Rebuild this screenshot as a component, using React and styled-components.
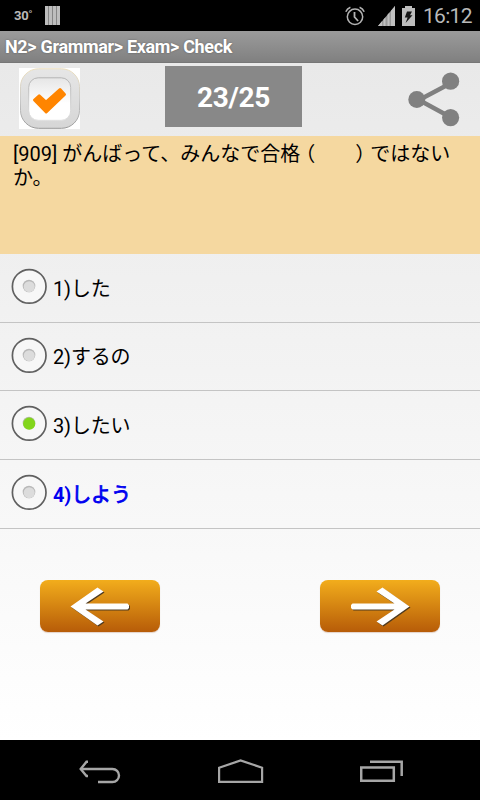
import React, { useState } from 'react';
import styled, { createGlobalStyle } from 'styled-components';

const GlobalStyle = createGlobalStyle`
  body {
    margin: 0;
    background: #000;
    font-family: Roboto, "Noto Sans CJK JP", sans-serif;
  }
`;

const Screen = styled.div`
  display: flex;
  flex-direction: column;
  width: 480px;
  height: 800px;
  overflow: hidden;
`;

const StatusBar = styled.header`
  box-sizing: border-box;
  display: flex;
  align-items: center;
  justify-content: space-between;
  height: 31px;
  padding: 0 8px 0 14px;
  background: #000;
  color: #b9b9b9;
`;

const StatusGroup = styled.div`
  display: flex;
  align-items: center;
  gap: ${(props) => props.$gap}px;
`;

const Temperature = styled.span`
  width: 18px;
  font-size: 13px;
  font-weight: 700;
  line-height: 30px;
  letter-spacing: -0.3px;
  padding-top: 1px;
`;

const Clock = styled.span`
  width: 49px;
  padding-top: 2px;
  font-size: 21px;
  line-height: 29px;
  letter-spacing: -0.7px;
  white-space: nowrap;
`;

const TitleBar = styled.div`
  box-sizing: border-box;
  height: 32px;
  padding-left: 5px;
  border-bottom: 1px solid #777;
  background: linear-gradient(#9b9b9b, #808080);
  color: #fff;
  font-size: 18px;
  font-weight: 700;
  line-height: 32px;
  letter-spacing: -0.33px;
  text-shadow: 0 0 2px rgba(0, 0, 0, 0.35);
  white-space: nowrap;
`;

const Content = styled.main`
  display: flex;
  flex-direction: column;
  height: 677px;
  background: linear-gradient(#e9e9e9, #fff);
`;

const Toolbar = styled.div`
  box-sizing: border-box;
  display: flex;
  align-items: flex-start;
  height: 73px;
  padding: 3px 18px 0 19px;
`;

const IconButton = styled.button`
  display: block;
  padding: 0;
  border: 0;
  margin-top: ${(props) => props.$top}px;
  background: none;
  line-height: 0;
`;

const Counter = styled.div`
  width: 137px;
  height: 61px;
  margin: 0 auto 0 85px;
  background: #888;
  color: #fff;
  font-size: 28px;
  font-weight: 700;
  line-height: 63px;
  letter-spacing: -0.3px;
  text-align: center;
`;

const Question = styled.p`
  box-sizing: border-box;
  height: 118px;
  margin: 0;
  padding: 5px 12px 0 13px;
  background: #f5d8a0;
  color: #000;
  font-size: 20px;
  line-height: 24px;
`;

// half-width form of the full-width brackets
const Blank = styled.span`
  margin: 0 5px;
  font-family: "Noto Sans CJK JP", sans-serif;
  font-feature-settings: "halt";
`;

const Option = styled.label`
  box-sizing: border-box;
  display: flex;
  align-items: center;
  gap: 5px;
  height: ${(props) => props.$height}px;
  padding: 0 0 3px 11px;
  border-bottom: 1px solid #c4c4c4;
  color: ${(props) => (props.$correct ? '#0000f0' : '#000')};
  font-size: 20px;
`;

const OptionText = styled.span`
  padding-top: 4px;
  line-height: 24px;
  letter-spacing: -0.15px;
`;

const OptionNumber = styled.span`
  font-weight: ${(props) => (props.$correct ? 700 : 400)};
`;

const OptionLabel = styled.span`
  -webkit-text-stroke: ${(props) => (props.$correct ? '0.8px' : '0')};
`;

const Pager = styled.div`
  display: flex;
  justify-content: space-between;
  padding: 51px 40px 0;
`;

const PagerButton = styled.button`
  display: flex;
  align-items: center;
  justify-content: center;
  width: 120px;
  height: 52px;
  padding: 1px 0 0 1px;
  border: 0;
  border-radius: 8px;
  background: linear-gradient(#f2ad1c, #b75c08);
  box-shadow: 0 1px 1px rgba(150, 80, 40, 0.25);
`;

const NavBar = styled.nav`
  box-sizing: border-box;
  display: flex;
  align-items: center;
  justify-content: space-between;
  height: 60px;
  padding: 3px 77px 0 79px;
  background: #000;
`;

const AlarmIcon = () => (
  <svg width="20" height="20" viewBox="0 0 20 20" fill="none" stroke="#b3b3b3" strokeWidth="1.5">
    <circle cx="10" cy="10.8" r="7.7" />
    <path d="M9.5 6v5l3.6 4" strokeWidth="1.8" />
    <path d="M.8 5.8Q2 2.5 5.4 1.2M19.2 5.8Q18 2.5 14.6 1.2" />
  </svg>
);

const SignalIcon = () => (
  <svg width="18" height="20" viewBox="0 0 18 20">
    <path d="M0 20 17 0v20z" fill="#999" />
    <path d="M0 20 4 15.3V20zM5.5 20v-6.5l2-2.3V20zM9.5 20V8.8l2-2.3V20zM13 20V4.7L17 0v20z" fill="#c0c0c0" />
  </svg>
);

const BatteryIcon = () => (
  <svg width="13" height="20" viewBox="0 0 13 20">
    <path d="M3 0h7v2h3v18H0V2h3z" fill="#bdbdbd" />
    <path d="M5 5.5h5L8 9.3h2.5L3.6 17l2-5.5H2.8z" fill="#151515" />
  </svg>
);

const BarsIcon = () => (
  <svg width="15" height="19" viewBox="0 0 15 19">
    <path d="M0 0h15v19H0z" fill="#858585" />
    <path d="M0 0h3v19H0zM4 0h3v19H4zM8 0h3v19H8zM12 0h3v19h-3z" fill="#bdbdbd" />
  </svg>
);

const CheckIcon = () => (
  <svg width="61" height="61" viewBox="0 0 61 61">
    <defs>
      <linearGradient id="frame" x2="0" y2="1">
        <stop stopColor="#e6e6e6" />
        <stop offset="1" stopColor="#d6d6d6" />
      </linearGradient>
      <linearGradient id="inner" x2="0" y2="1">
        <stop stopColor="#e6e6e6" />
        <stop offset=".6" stopColor="#fff" />
      </linearGradient>
      <linearGradient id="edge" x2="0" y2="1">
        <stop stopColor="#eddfbd" />
        <stop offset=".5" stopColor="#ccc" />
        <stop offset="1" stopColor="#999" />
      </linearGradient>
      <linearGradient id="innerEdge" x2="0" y2="1">
        <stop stopColor="#b4b4b4" />
        <stop offset="1" stopColor="#e0e0e0" />
      </linearGradient>
    </defs>
    <path d="M0 0h61v61H0z" fill="#fff" />
    <rect x="1.5" y=".8" width="59" height="59.5" rx="18" fill="url(#frame)" stroke="url(#edge)" />
    <rect x="9.7" y="9.8" width="42" height="42.5" rx="9.5" fill="url(#inner)" stroke="url(#innerEdge)" />
    <path d="M15.5 32 20.2 27.8 27 34 41 21.5 45.5 26.5 27.2 44z" fill="#ff8500" stroke="#ff8500" strokeWidth="3" strokeLinejoin="round" />
  </svg>
);

const ShareIcon = () => (
  <svg width="54" height="56" viewBox="0 0 54 56">
    <path d="M45 10 11 28l34 18.5" fill="none" stroke="#808080" strokeWidth="4.5" />
    <g fill="#808080">
      <circle cx="42.6" cy="9.2" r="8.6" />
      <circle cx="8.8" cy="27.5" r="8.5" />
      <circle cx="42.6" cy="45.6" r="8.6" />
    </g>
  </svg>
);

const RadioIcon = ({ checked }) => (
  <svg width="37" height="37" viewBox="0 0 37 37">
    <circle cx="18.2" cy="18.4" r="16.8" fill="#f7f7f7" stroke="#606060" strokeWidth="1.7" />
    <circle cx="18" cy="18" r="6.3" fill={checked ? '#b5bda8' : '#b8b8b8'} />
    <circle cx="18.2" cy="18.7" r={checked ? 6.1 : 5.5} fill={checked ? '#82d51b' : '#dcdcdc'} />
  </svg>
);

const ArrowIcon = ({ direction }) => {
  const points = direction === 'left'
    ? '0,19 27,0 33,4 15,16 57,16 58.5,17.5 58.5,20.5 57,22 15,22 33,34 27,38'
    : '59,19 32,0 26,4 44,16 2,16 .5,17.5 .5,20.5 2,22 44,22 26,34 32,38';
  return (
    <svg width="62" height="41" viewBox="-.5 -1.5 62 41">
      <polygon points={points} fill="#4f3a20" transform="translate(1 1)" />
      <polygon points={points} fill="#fff" />
    </svg>
  );
};

const BackIcon = () => (
  <svg width="42" height="24" viewBox="0 0 42 24" fill="none" stroke="#a6a6a6" strokeWidth="2.4">
    <path d="M2 9h31.5a6.5 6.5 0 0 1 0 13H19" />
    <path d="M9 1.8H7.5L1.7 9l5.8 7H9" />
  </svg>
);

const HomeIcon = () => (
  <svg width="46" height="25" viewBox="0 0 46 25" fill="none" stroke="#a6a6a6" strokeWidth="2.2">
    <path d="M1.1 22.8V8.7L22.6 1.5l21.5 7.2v14.1z" />
  </svg>
);

const RecentsIcon = () => (
  <svg width="43" height="23" viewBox="0 0 43 23" fill="none" stroke="#a6a6a6" strokeWidth="2.5">
    <path d="M1.2 7.5h32.6v13.3H1.2zM10 1.8h31.7V16" />
  </svg>
);

const options = [
  { number: '1)', label: 'した', height: 69 },
  { number: '2)', label: 'するの', height: 68 },
  { number: '3)', label: 'したい', height: 69 },
  { number: '4)', label: 'しよう', height: 69, correct: true },
];

const App = () => {
  const [selected, setSelected] = useState(2);

  return (
    <Screen>
      <GlobalStyle />
      <StatusBar>
        <StatusGroup $gap={13}>
          <Temperature>30˚</Temperature>
          <BarsIcon />
        </StatusGroup>
        <StatusGroup $gap={13}>
          <AlarmIcon />
          <StatusGroup $gap={8}>
            <StatusGroup $gap={6}>
              <SignalIcon />
              <BatteryIcon />
            </StatusGroup>
            <Clock>16:12</Clock>
          </StatusGroup>
        </StatusGroup>
      </StatusBar>
      <TitleBar>N2&gt; Grammar&gt; Exam&gt; Check</TitleBar>
      <Content>
        <Toolbar>
          <IconButton $top={2} aria-label="check"><CheckIcon /></IconButton>
          <Counter>23/25</Counter>
          <IconButton $top={6} aria-label="share"><ShareIcon /></IconButton>
        </Toolbar>
        <Question>
          [909] がんばって、みんなで合格
          <Blank>{'（\u3000\u3000）'}</Blank>
          ではないか。
        </Question>
        {options.map((option, index) => (
          <Option
            key={option.label}
            $height={option.height}
            $correct={option.correct}
            onClick={() => setSelected(index)}
          >
            <RadioIcon checked={selected === index} />
            <OptionText>
              <OptionNumber $correct={option.correct}>{option.number}</OptionNumber>
              <OptionLabel $correct={option.correct}>{option.label}</OptionLabel>
            </OptionText>
          </Option>
        ))}
        <Pager>
          <PagerButton aria-label="previous"><ArrowIcon direction="left" /></PagerButton>
          <PagerButton aria-label="next"><ArrowIcon direction="right" /></PagerButton>
        </Pager>
      </Content>
      <NavBar>
        <BackIcon />
        <HomeIcon />
        <RecentsIcon />
      </NavBar>
    </Screen>
  );
};

export default App;
